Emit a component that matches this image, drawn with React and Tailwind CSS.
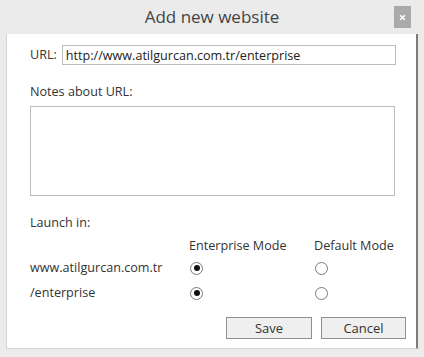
export default function App() {
  const rows = [
    { label: 'www.atilgurcan.com.tr', enterprise: true },
    { label: '/enterprise', enterprise: true },
  ];

  const Radio = ({ checked }) => (
    <span className="w-[13px] h-[13px] rounded-full border border-[#7a7a7a] bg-white flex items-center justify-center">
      {checked && <span className="w-[6px] h-[6px] rounded-full bg-[#111]" />}
    </span>
  );

  return (
    <div
      className="w-[424px] h-[357px] bg-[#ebebeb] text-[#333] text-[12.6px] flex flex-col whitespace-nowrap"
      style={{ fontFamily: '"Open Sans", "Noto Sans", sans-serif' }}
    >
      {/* Title bar */}
      <div className="h-[34px] shrink-0 grid grid-cols-[1fr_auto_1fr] items-center">
        <div />
        <h1 className="text-[17px] text-[#444] leading-none pb-[1px]">Add new website</h1>
        <div className="flex justify-end pr-[13px] self-start pt-[6px]">
          <button className="w-[17px] h-[22px] bg-[#aaaaaa] text-white text-[13px] font-bold leading-none flex items-center justify-center">
            ×
          </button>
        </div>
      </div>

      {/* Content panel */}
      <div className="ml-[6px] w-[412px] h-[315px] shrink-0 bg-white border-l border-b border-[#d4d4d4] border-r-2 border-r-[#7c7c7c] pl-[23px] pr-[10px] pt-[11px] flex flex-col">
        <div className="flex items-center gap-[5px]">
          <span>URL:</span>
          <input
            className="w-[334px] h-[20px] border border-[#bdbdbd] px-[3px] text-[12.6px] text-[#222] outline-none"
            defaultValue="http://www.atilgurcan.com.tr/enterprise"
          />
        </div>

        <label className="mt-[18px] leading-[18px]">Notes about URL:</label>
        <textarea className="mt-[5px] shrink-0 w-[365px] h-[90px] border border-[#bdbdbd] resize-none outline-none" />

        <div className="mt-[18px] leading-[18px]">Launch in:</div>

        <div className="mt-[4px] grid grid-cols-[159px_125px_1fr] grid-rows-[20px_24px_26px] items-center">
          <div />
          <div>Enterprise Mode</div>
          <div>Default Mode</div>
          {rows.map((r) => (
            <>
              <div key={r.label + 'l'}>{r.label}</div>
              <div key={r.label + 'e'} className="pl-[1px]">
                <Radio checked={r.enterprise} />
              </div>
              <div key={r.label + 'd'} className="pl-[1px]">
                <Radio checked={!r.enterprise} />
              </div>
            </>
          ))}
        </div>

        <div className="mt-auto mb-[9px] flex justify-end gap-[9px]">
          <button className="w-[86px] h-[22px] bg-[#efefef] border border-[#8f8f8f] text-[13px] leading-none">Save</button>
          <button className="w-[85px] h-[22px] bg-[#efefef] border border-[#8f8f8f] text-[13px] leading-none">Cancel</button>
        </div>
      </div>
    </div>
  );
}
